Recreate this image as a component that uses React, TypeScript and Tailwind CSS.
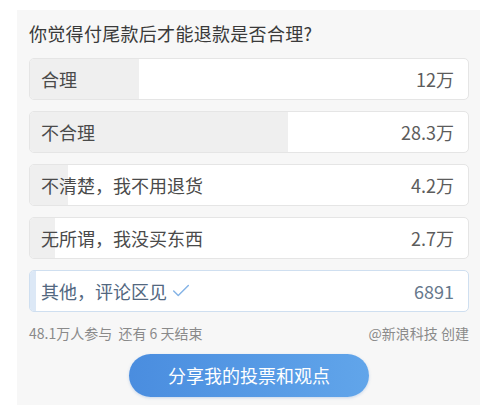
import React from 'react';
import { Check } from 'lucide-react';

type Option = { label: string; count: string; value: number; chosen?: boolean };

const total = 48.1;

const options: Option[] = [
    { label: '合理', count: '12万', value: 12 },
    { label: '不合理', count: '28.3万', value: 28.3 },
    { label: '不清楚，我不用退货', count: '4.2万', value: 4.2 },
    { label: '无所谓，我没买东西', count: '2.7万', value: 2.7 },
    { label: '其他，评论区见', count: '6891', value: 0.6891, chosen: true },
];

const OptionBar: React.FC<{ option: Option }> = ({ option }) => {
    const pct = (option.value / total) * 100;
    return (
        <div
            className={`relative h-[42px] rounded-[5px] border bg-white overflow-hidden ${
                option.chosen ? 'border-[#cfdff0]' : 'border-[#e5e5e5]'
            }`}
        >
            <div
                className={`absolute left-0 top-0 bottom-0 ${option.chosen ? 'bg-[#dce8f6]' : 'bg-[#efefef]'}`}
                style={{ width: `${pct}%` }}
            />
            <div className="relative flex h-full items-center justify-between pl-[11px] pr-[14px] text-[18px]">
                <div className={`flex items-center ${option.chosen ? 'text-[#52677f]' : 'text-[#4a4a4a]'}`}>
                    <span>{option.label}</span>
                    {option.chosen && <Check className="ml-[3px] h-[22px] w-[22px] text-[#86b4e6]" strokeWidth={1.6} />}
                </div>
                <span className={option.chosen ? 'text-[#66788c]' : 'text-[#5c5c5c]'}>{option.count}</span>
            </div>
        </div>
    );
};

export default function App() {
    return (
        <div className="h-[405px] w-[499px] overflow-hidden bg-white pt-[10px] font-['Noto_Sans_CJK_SC','Noto_Sans',sans-serif]">
            <div className="ml-[17px] h-[420px] w-[463px] bg-[#f7f7f7] pl-[12px] pr-[11px] pt-[11px]">
                <h1 className="text-[18px] leading-[24px] tracking-[0.3px] text-[#3a3a3a]">你觉得付尾款后才能退款是否合理?</h1>

                <div className="mt-[13px] flex flex-col gap-[11px]">
                    {options.map((o) => (
                        <OptionBar key={o.label} option={o} />
                    ))}
                </div>

                <div className="mt-[10px] flex items-center justify-between text-[14px] leading-[22px] text-[#8a8a8a]">
                    <span>48.1万人参与&nbsp;&nbsp;还有 6 天结束</span>
                    <span>@新浪科技 创建</span>
                </div>

                <div className="mt-[10px] flex justify-center">
                    <button className="h-[43px] w-[240px] rounded-full bg-linear-to-r from-[#4a8ddf] to-[#61a5ea] text-[18px] text-white shadow-[0_1px_3px_rgba(60,120,200,0.25)]">
                        分享我的投票和观点
                    </button>
                </div>
            </div>
        </div>
    );
}
